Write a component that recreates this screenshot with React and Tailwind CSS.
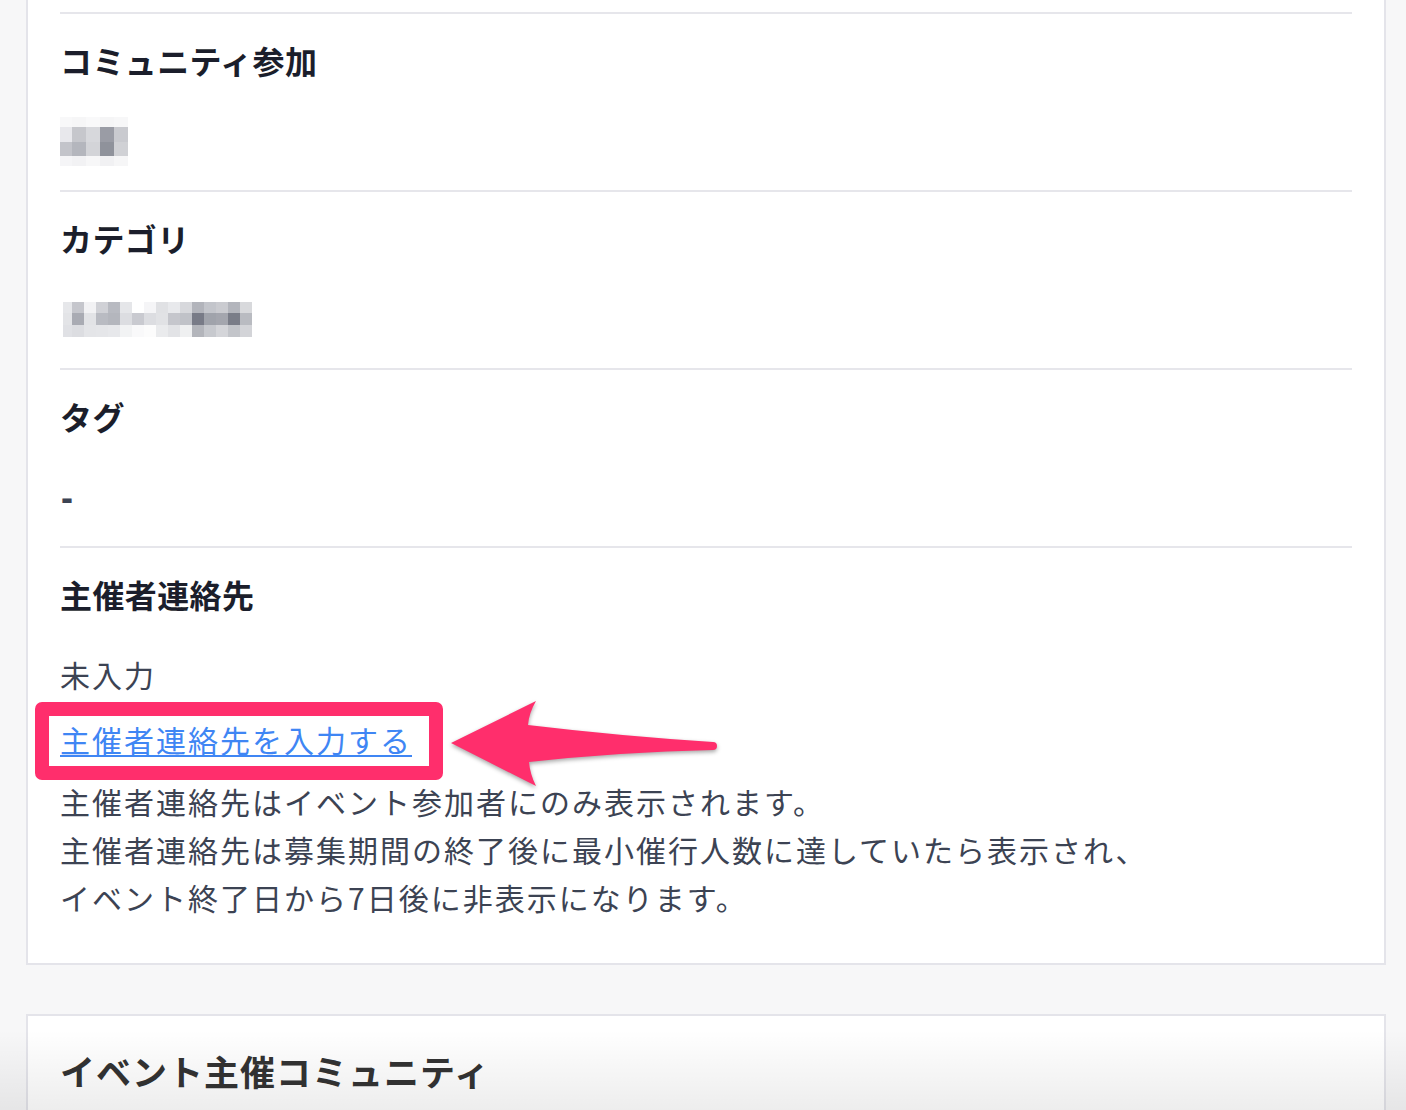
import React from "react";

const FONT = { fontFamily: '"Noto Sans CJK JP", "Noto Sans", sans-serif' };

const mosaic1 = {
  widths: [12, 14, 14, 14, 14],
  rows: [
    { h: 10, c: ["#f8f8f9", "#f6f6f7", "#f9f9fa", "#f5f5f6", "#f7f7f8"] },
    { h: 15, c: ["#e8e8ec", "#c6c7cc", "#d7d8dc", "#9a9ca5", "#c9cacf"] },
    { h: 14, c: ["#c3c4ca", "#b4b6bd", "#d3d4d8", "#8f929b", "#d0d1d5"] },
    { h: 10, c: ["#f5f5f7", "#f2f2f4", "#f7f7f8", "#f1f1f3", "#f6f6f7"] },
  ],
};

const mosaic2 = {
  widths: [9, 12, 12, 12, 12, 12, 12, 12, 12, 12, 12, 12, 12, 12, 12, 12],
  rows: [
    {
      h: 11,
      c: ["#e6e7ea", "#c5c6cc", "#f2f2f4", "#d0d1d6", "#b8bac1", "#e5e6e9", "#ffffff", "#f5f5f7", "#e0e1e4", "#e8e9ec", "#d7d8dc", "#b2b4bb", "#c3c5cb", "#cacbd0", "#b3b5bc", "#d8d9dc"],
    },
    {
      h: 12,
      c: ["#e3e4e7", "#a9abb3", "#e2e3e6", "#b9bbc2", "#b4b6bd", "#dcdde1", "#c9cad0", "#dcdde1", "#e1e2e5", "#c5c6cc", "#c0c2c8", "#787b87", "#a0a3ab", "#a4a6ae", "#7a7d88", "#b9bbc1"],
    },
    {
      h: 12,
      c: ["#e0e1e5", "#dcdde1", "#e4e5e8", "#e5e6e9", "#e7e8eb", "#f2f3f4", "#f9f9fa", "#fcfcfc", "#eaebed", "#e2e3e6", "#eff0f1", "#b3b5bb", "#c7c9ce", "#d4d5d9", "#c3c5ca", "#d3d4d8"],
    },
  ],
};

function Mosaic({ data }) {
  return (
    <div className="flex flex-col">
      {data.rows.map((row, ri) => (
        <div key={ri} className="flex">
          {row.c.map((col, ci) => (
            <div
              key={ci}
              style={{ width: data.widths[ci], height: row.h, backgroundColor: col }}
            />
          ))}
        </div>
      ))}
    </div>
  );
}

function Section({ title, children, last }) {
  return (
    <div className={"border-t-2 border-[#e6e6eb] pt-[22px] " + (last ? "" : "pb-[25px]")}>
      <h3 className="h-[48px] text-[32px] leading-[48px] font-bold tracking-[0.4px] text-[#1b1e2b]">{title}</h3>
      <div className="mt-[33px]">{children}</div>
    </div>
  );
}

export default function App() {
  return (
    <div
      className="relative h-[1110px] w-full overflow-hidden bg-[#f7f7f8]"
      style={FONT}
    >
      <div className="ml-[26px] mr-[20px] border-2 border-t-0 border-[#e4e4ea] bg-white px-[32px] pt-[12px] pb-[42px]">
        <Section title="コミュニティ参加">
          <div className="flex h-[48px] items-center">
            <Mosaic data={mosaic1} />
          </div>
        </Section>
        <Section title="カテゴリ">
          <div className="flex h-[48px] items-center pl-[3px]">
            <Mosaic data={mosaic2} />
          </div>
        </Section>
        <Section title="タグ">
          <div className="h-[48px] pl-[1px] font-['Liberation_Sans',sans-serif] text-[36px] leading-[50px] font-bold text-[#3c4353]">-</div>
        </Section>
        <Section title="主催者連絡先" last>
          <div className="text-[30px] leading-[48px] tracking-[2px] text-[#3c4353]">
            <p className="-mt-[1px]">未入力</p>
            <p className="mt-[17px]">
              <a
                href="#"
                className="text-[#3f86f4] underline decoration-2 underline-offset-[3px]"
              >
                主催者連絡先を入力する
              </a>
            </p>
            <p className="mt-[14px]">
              主催者連絡先はイベント参加者にのみ表示されます。
              <br />
              主催者連絡先は募集期間の終了後に最小催行人数に達していたら表示され、
              <br />
              イベント終了日から7日後に非表示になります。
            </p>
          </div>
        </Section>
      </div>

      <div className="mt-[49px] ml-[26px] mr-[20px] h-[200px] border-2 border-b-0 border-[#e4e4ea] bg-white px-[32px] pt-[31px]">
        <h2 className="h-[48px] text-[35px] leading-[48px] font-bold tracking-[1px] text-[#333333]">
          イベント主催コミュニティ
        </h2>
      </div>

      {/* annotation: highlight box */}
      <div className="pointer-events-none absolute left-[35px] top-[702px] h-[78px] w-[408px] rounded-[7px] border-[14px] border-[#ff2e6c]" />

      {/* annotation: arrow */}
      <svg
        className="pointer-events-none absolute inset-0 h-full w-full drop-shadow-[0_2px_2px_rgba(0,0,0,0.35)]"
        viewBox="0 0 1406 1110"
      >
        <path
          d="M451 743 L536 701 Q529 713 528 725 Q620 736 713 742 A4 4 0 0 1 713 750 Q620 752 529 762 Q530 774 536 786 Z"
          fill="#ff2e6c"
        />
      </svg>

      {/* bottom fade */}
      <div className="pointer-events-none absolute inset-x-0 bottom-0 h-[80px] bg-gradient-to-b from-transparent to-[rgba(0,0,0,0.07)]" />
    </div>
  );
}
